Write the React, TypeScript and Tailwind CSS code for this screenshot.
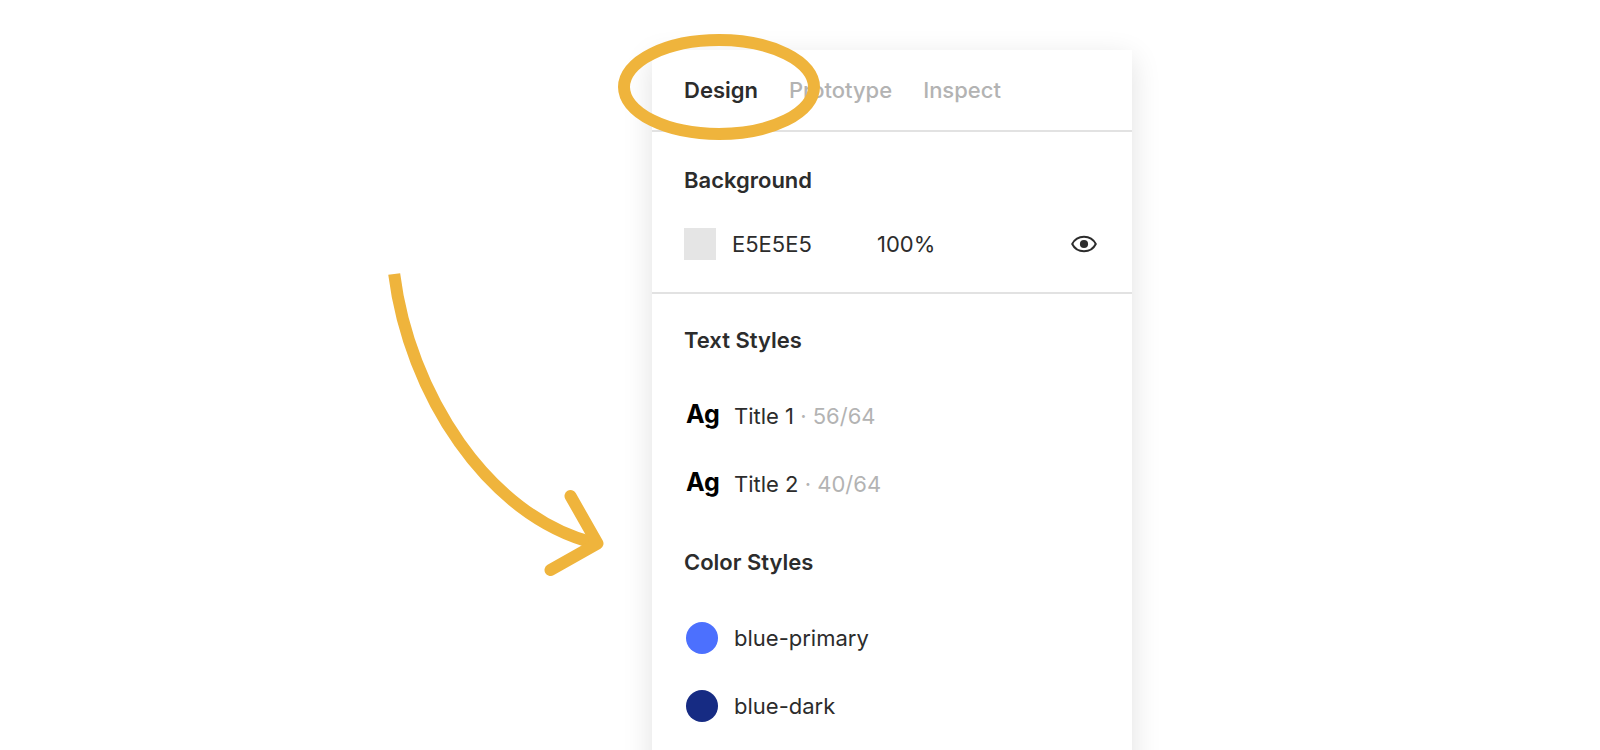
import { useState } from 'react'
import { clsx } from 'clsx'

const tabs = ['Design', 'Prototype', 'Inspect']

const textStyles = [
  { name: 'Title 1', size: '56/64' },
  { name: 'Title 2', size: '40/64' },
]

const colorStyles = [
  { name: 'blue-primary', swatch: 'bg-[#4c70fe]' },
  { name: 'blue-dark', swatch: 'bg-[#162b83]' },
]

function CurvedArrow() {
  return (
    <svg
      className="mt-[218px] h-[308px] w-[216px] shrink-0"
      viewBox="0 0 216 308"
      fill="none"
      stroke="#efb43c"
      strokeWidth="12"
      aria-hidden="true"
    >
      <path d="M6.2 6 C21 124 99 248 206 275" />
      <path d="M182.5 228 L209.5 275.5 L162.5 302" strokeLinecap="round" strokeLinejoin="round" />
    </svg>
  )
}

function EyeIcon() {
  return (
    <svg className="h-[18px] w-[26px]" viewBox="0 0 26 18" fill="none" aria-hidden="true">
      <path
        d="M1.2 9 C3.6 4.2 8 1.7 13 1.7 C18 1.7 22.4 4.2 24.8 9 C22.4 13.8 18 16.3 13 16.3 C8 16.3 3.6 13.8 1.2 9 Z"
        stroke="#2c2c2c"
        strokeWidth="2"
        strokeLinejoin="round"
      />
      <circle cx="13" cy="9" r="4.1" fill="#2c2c2c" />
    </svg>
  )
}

function SectionTitle({ children }: { children: string }) {
  return <h2 className="font-semibold">{children}</h2>
}

export default function App() {
  const [activeTab, setActiveTab] = useState('Design')
  const [color, setColor] = useState('E5E5E5')
  const [opacity, setOpacity] = useState('100%')
  const [visible, setVisible] = useState(true)

  return (
    <main className="flex min-h-screen justify-center gap-12 overflow-hidden bg-white pt-[50px] pr-20 font-['Inter',sans-serif] text-[22px] text-[#2c2c2c]">
      <CurvedArrow />

      {/* The panel runs past the bottom edge so its shadow doesn't fade out there */}
      <aside className="relative -mb-10 w-[480px] shrink-0 bg-white pb-16 shadow-[0_8px_28px_rgba(0,0,0,0.12)]">
        {/* Tabs */}
        <nav className="flex h-[82px] items-center gap-[31px] border-b-2 border-[#e2e2e2] px-8">
          {tabs.map((tab) => (
            <button
              key={tab}
              type="button"
              onClick={() => setActiveTab(tab)}
              className={clsx(
                'leading-8',
                tab === activeTab ? 'font-semibold' : 'font-medium text-[#b3b3b3]'
              )}
            >
              {tab}
            </button>
          ))}
        </nav>

        <svg
          className="pointer-events-none absolute -top-4 -left-[34px] h-[106px] w-[202px]"
          viewBox="0 0 202 106"
          fill="none"
          aria-hidden="true"
        >
          <ellipse cx="101" cy="53" rx="95" ry="47" stroke="#efb43c" strokeWidth="12" />
        </svg>

        {/* Background */}
        <section className="border-b-2 border-[#e2e2e2] p-8 leading-8">
          <SectionTitle>Background</SectionTitle>
          <div className="mt-8 flex h-8 items-center">
            <button type="button" aria-label="Pick color" className="size-8 bg-[#e5e5e5]" />
            <input
              aria-label="Background color"
              value={color}
              onChange={(e) => setColor(e.target.value)}
              className="ml-4 w-[145px] outline-none"
            />
            <input
              aria-label="Opacity"
              value={opacity}
              onChange={(e) => setOpacity(e.target.value)}
              className="w-20 outline-none"
            />
            <button
              type="button"
              aria-label="Toggle visibility"
              aria-pressed={visible}
              onClick={() => setVisible(!visible)}
              className={clsx('ml-auto flex size-8 items-center justify-center', !visible && 'opacity-40')}
            >
              <EyeIcon />
            </button>
          </div>
        </section>

        {/* Styles */}
        <section className="flex flex-col gap-[43px] px-8 pt-[29px] leading-[34px]">
          <SectionTitle>Text Styles</SectionTitle>
          <ul className="mb-0.5 flex flex-col gap-9 pl-0.5">
            {textStyles.map((style) => (
              <li key={style.name} className="flex h-8 items-center gap-4">
                <span className="w-8 self-start text-[25px] leading-7 font-bold text-black">Ag</span>
                <span>
                  {style.name}
                  <span className="text-[#b3b3b3]"> · {style.size}</span>
                </span>
              </li>
            ))}
          </ul>

          <SectionTitle>Color Styles</SectionTitle>
          <ul className="flex flex-col gap-9 pl-0.5">
            {colorStyles.map((style) => (
              <li key={style.name} className="flex h-8 items-center gap-4">
                <span className={clsx('size-8 rounded-full', style.swatch)} />
                <span>{style.name}</span>
              </li>
            ))}
          </ul>
        </section>
      </aside>
    </main>
  )
}
